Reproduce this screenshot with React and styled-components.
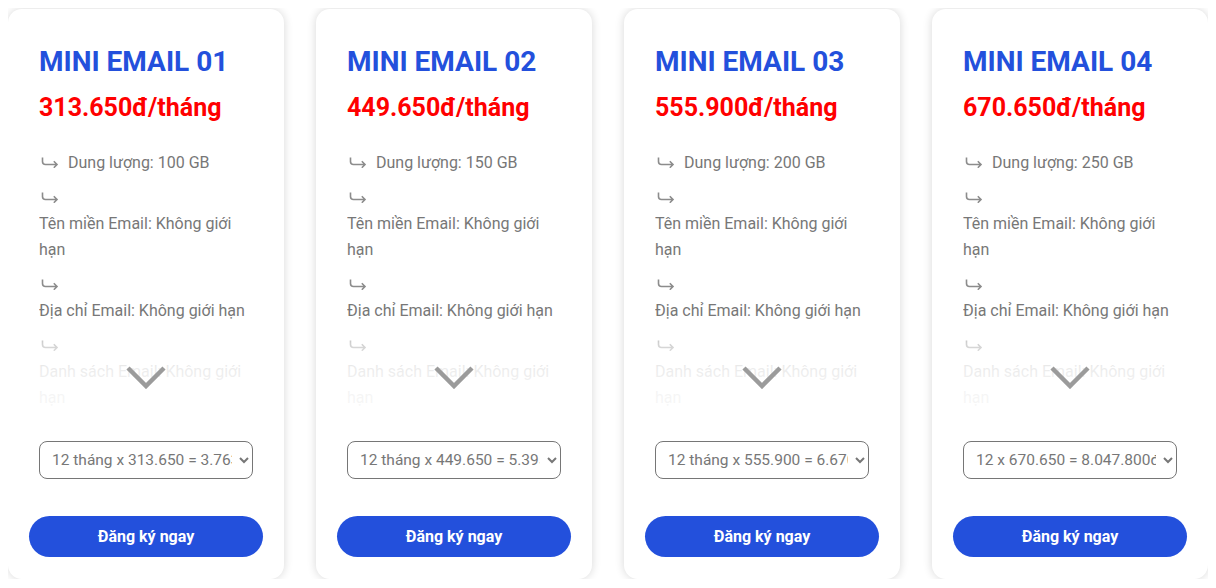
import React from "react";
import styled, { createGlobalStyle } from "styled-components";

const GlobalStyle = createGlobalStyle`
  * { box-sizing: border-box; }
  body {
    margin: 8px;
    background: #fff;
    font-family: Roboto, "Noto Sans", sans-serif;
  }
`;

const Grid = styled.div`
  display: grid;
  grid-template-columns: repeat(4, 1fr);
  gap: 32px;
  padding-top: 1px;
`;

const Card = styled.div`
  background: #fff;
  border-radius: 14px;
  box-shadow: 0 0 10px rgba(0, 0, 0, 0.16);
  padding: 36px 21px 22px;
  display: flex;
  flex-direction: column;
`;

const Inner = styled.div`
  padding: 0 10px;
`;

const Title = styled.h3`
  margin: 0;
  font-size: 28px;
  line-height: 34px;
  font-weight: 700;
  color: #2350dc;
`;

const Price = styled.div`
  margin-top: 14px;
  font-size: 25px;
  line-height: 30px;
  font-weight: 700;
  color: #ff0000;
`;

const ListWrap = styled.div`
  position: relative;
  margin-top: 27px;
  height: 260px;
  overflow: hidden;

  &::after {
    content: "";
    position: absolute;
    left: 0;
    right: 0;
    bottom: 0;
    height: 95px;
    background: linear-gradient(
      rgba(255, 255, 255, 0) 0%,
      rgba(255, 255, 255, 0.6) 30%,
      rgba(255, 255, 255, 0.86) 55%,
      rgba(255, 255, 255, 0.93) 85%
    );
  }
`;

const List = styled.ul`
  list-style: none;
  margin: 0;
  padding: 0;
`;

const Item = styled.li`
  font-size: 16px;
  line-height: 26px;
  color: #777;
  margin-bottom: 9px;
`;

const Hook = styled.svg`
  display: inline-block;
  vertical-align: 0;
  margin: 0 9px 0 2px;
`;

const ItemText = styled.span`
  display: inline-block;
`;

const Chevron = styled.svg`
  position: absolute;
  left: 50%;
  bottom: 21px;
  transform: translateX(-50%);
  z-index: 2;
`;

const Select = styled.select`
  margin-top: 31px;
  width: 100%;
  height: 38px;
  border: 1px solid #767676;
  border-radius: 8px;
  padding: 0 4px 0 8px;
  font-family: Roboto, sans-serif;
  font-size: 15.5px;
  color: #777;
  background: #fff;
`;

const Button = styled.button`
  margin-top: 37px;
  height: 41px;
  width: 100%;
  border: none;
  border-radius: 21px;
  background: #2350dc;
  color: #fff;
  font-family: Roboto, sans-serif;
  font-size: 16px;
  font-weight: 700;
  cursor: pointer;
`;

const plans = [
  { name: "MINI EMAIL 01", price: "313.650", gb: 100, option: "12 tháng x 313.650 = 3.763.800đ" },
  { name: "MINI EMAIL 02", price: "449.650", gb: 150, option: "12 tháng x 449.650 = 5.395.800đ" },
  { name: "MINI EMAIL 03", price: "555.900", gb: 200, option: "12 tháng x 555.900 = 6.670.800đ" },
  { name: "MINI EMAIL 04", price: "670.650", gb: 250, option: "12 x 670.650 = 8.047.800đ" },
];

function HookArrow() {
  return (
    <Hook width="18" height="11" viewBox="0 0 18 11">
      <path
        d="M1.5 0.5 V4.5 Q1.5 7.5 4.5 7.5 H16 M12.8 4.3 L16 7.5 L12.8 10.7"
        fill="none"
        stroke="#8c8c8c"
        strokeWidth="1.6"
      />
    </Hook>
  );
}

function PlanCard({ plan }) {
  const features = [
    `Dung lượng: ${plan.gb} GB`,
    "Tên miền Email: Không giới hạn",
    "Địa chỉ Email: Không giới hạn",
    "Danh sách Email: Không giới hạn",
  ];
  return (
    <Card>
      <Inner>
        <Title>{plan.name}</Title>
        <Price>{plan.price}đ/tháng</Price>
        <ListWrap>
          <List>
            {features.map((f) => (
              <Item key={f}>
                <HookArrow />
                <ItemText>{f}</ItemText>
              </Item>
            ))}
          </List>
          <Chevron width="40" height="24" viewBox="0 0 40 24">
            <path d="M2 3 L20 21 L38 3" fill="none" stroke="#9b9b9b" strokeWidth="4.5" />
          </Chevron>
        </ListWrap>
        <Select defaultValue={plan.option}>
          <option>{plan.option}</option>
        </Select>
      </Inner>
      <Button>Đăng ký ngay</Button>
    </Card>
  );
}

export default function App() {
  return (
    <>
      <GlobalStyle />
      <Grid>
        {plans.map((p) => (
          <PlanCard key={p.name} plan={p} />
        ))}
      </Grid>
    </>
  );
}
